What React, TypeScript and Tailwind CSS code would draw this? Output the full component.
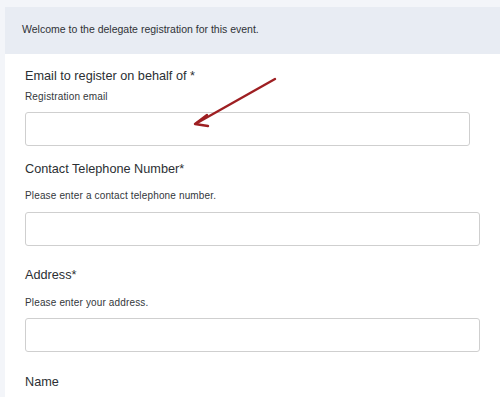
import React from "react";

const font = { fontFamily: '"Liberation Sans", Arial, sans-serif' };

function Field({
  title,
  helper,
  titleMt,
  helperMt,
  inputMt,
  inputW,
}: {
  title: string;
  helper: string;
  titleMt: string;
  helperMt: string;
  inputMt: string;
  inputW: string;
}) {
  return (
    <div className={titleMt}>
      <div className="text-[12.7px] leading-[16px] text-[#2b2f33]">{title}</div>
      <div className={`${helperMt} text-[10px] leading-[12px] tracking-[0.15px] text-[#33373b]`}>{helper}</div>
      <div className={`${inputMt} ${inputW} h-[34px] rounded-[3px] border border-[#cfcfcf] bg-white`} />
    </div>
  );
}

export default function App() {
  return (
    <div style={font} className="relative w-[500px] h-[397px] overflow-hidden bg-[#f3f5f9] pl-[5px] pt-[7px]">
      <div className="h-full bg-white">
        <div className="h-[47px] bg-[#e8ecf3] px-[17px] flex items-center pb-[2px]">
          <span className="text-[10.5px] leading-[13px] text-[#2f3236]">
            Welcome to the delegate registration for this event.
          </span>
        </div>
        <div className="px-[20px] pt-[14px]">
          <Field
            title="Email to register on behalf of *"
            helper="Registration email"
            titleMt="mt-0"
            helperMt="mt-[7px]"
            inputMt="mt-[9px]"
            inputW="w-[445px]"
          />
          <Field
            title="Contact Telephone Number*"
            helper="Please enter a contact telephone number."
            titleMt="mt-[15px]"
            helperMt="mt-[13px]"
            inputMt="mt-[10px]"
            inputW="w-[455px]"
          />
          <Field
            title="Address*"
            helper="Please enter your address."
            titleMt="mt-[21px]"
            helperMt="mt-[14px]"
            inputMt="mt-[9px]"
            inputW="w-[455px]"
          />
          <div className="mt-[22px] text-[12.7px] leading-[16px] text-[#2b2f33]">Name</div>
        </div>
      </div>
      <svg
        className="absolute left-0 top-0 pointer-events-none"
        width="500"
        height="397"
        viewBox="0 0 500 397"
      >
        <line x1="275" y1="79" x2="197" y2="123" stroke="#9e1f22" strokeWidth="2.4" strokeLinecap="round" />
        <polyline
          points="207,115 195,124 208,126"
          fill="none"
          stroke="#9e1f22"
          strokeWidth="2.4"
          strokeLinecap="round"
          strokeLinejoin="round"
        />
      </svg>
    </div>
  );
}
